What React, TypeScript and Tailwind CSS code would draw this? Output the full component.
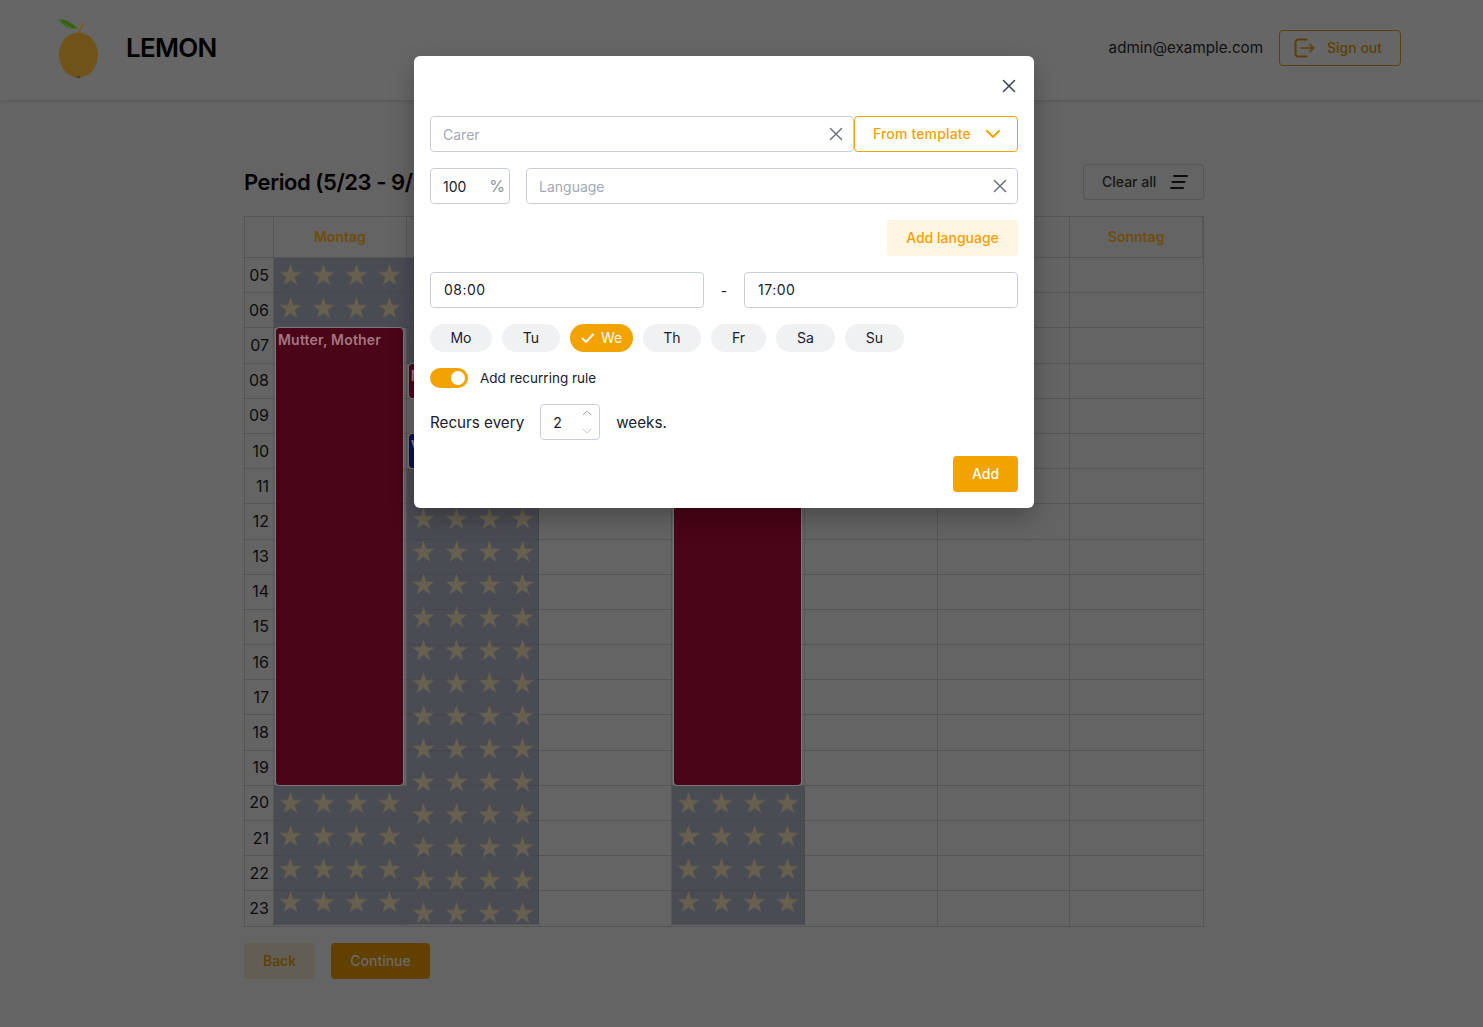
import React from "react";

const hours = ["05","06","07","08","09","10","11","12","13","14","15","16","17","18","19","20","21","22","23"];
const days = ["Montag","Dienstag","Mittwoch","Donnerstag","Freitag","Samstag","Sonntag"];

function StarBlock({ id, className, tileH = 33 }: { id: string; className: string; tileH?: number }) {
  return (
    <svg className={"w-full h-full " + className} aria-hidden="true">
      <defs>
        <pattern id={id} x="0" y="0.5" width="33" height={tileH} patternUnits="userSpaceOnUse">
          <polygon
            fill="#67604f"
            points="16.5,5.5 19.1,13.6 27.5,13.6 20.7,18.6 23.3,26.6 16.5,21.7 9.7,26.6 12.3,18.6 5.5,13.6 13.9,13.6"
          />
        </pattern>
      </defs>
      <rect width="100%" height="100%" fill="#40434c" fillOpacity="0.72" />
      <rect width="100%" height="100%" fill={`url(#${id})`} />
    </svg>
  );
}

function Ev({ className, color, text }: { className: string; color: string; text: string }) {
  return (
    <div className={`${className} ${color} z-10 ml-[2px] mr-[4px] mb-[1px] rounded-[3px] outline outline-1 outline-[#777] px-[2px] text-[14px] font-semibold tracking-[0.2px] leading-[23px] text-[#a47684]`}>
      {text}
    </div>
  );
}

function X({ size = 14, color = "#6b7280", sw = 1.5 }: { size?: number; color?: string; sw?: number }) {
  return (
    <svg width={size} height={size} viewBox="0 0 14 14" fill="none" stroke={color} strokeWidth={sw} strokeLinecap="round">
      <path d="M1.5 1.5l11 11M12.5 1.5l-11 11" />
    </svg>
  );
}

function Chip({ label, w, active }: { label: string; w: string; active?: boolean }) {
  return (
    <div className={`${w} h-7 pb-[2px] rounded-full flex items-center justify-center text-[14px] ${active ? "bg-[#f3a300] text-white" : "bg-[#f0f1f3] text-[#1a202c]"}`}>
      {active && (
        <svg width="14" height="14" viewBox="0 0 14 14" fill="none" stroke="white" strokeWidth="2" strokeLinecap="round" strokeLinejoin="round" className="mr-[6px] mt-[2px]">
          <path d="M1.5 7.5l3.5 3.5 7-7.5" />
        </svg>
      )}
      {label}
    </div>
  );
}

function Modal() {
  const field = "h-9 rounded-[4px] border border-[#c8ced9] flex items-center text-[14px]";
  return (
    <div className="absolute left-[414px] top-[56px] w-[620px] h-[452px] bg-white rounded-[6px] shadow-[0_10px_25px_rgba(0,0,0,0.25)] p-4 flex flex-col gap-4 z-20">
      <div className="h-7 flex items-center justify-end pr-[2px]">
        <X size={14} color="#374151" />
      </div>
      <div className="flex">
        <div className={`${field} w-[424px] pl-3 pr-[10px] justify-between text-[#a3a9b5]`}>
          <span>Carer</span>
          <X size={14} />
        </div>
        <div className="h-9 w-[164px] pb-[2px] rounded-[4px] border border-[#f3a300] flex items-center pl-[18px] text-[14px] font-medium tracking-[0.15px] text-[#f3a300]">
          <span>From template</span>
          <svg width="16" height="10" viewBox="0 0 16 10" fill="none" stroke="#f3a300" strokeWidth="2" className="ml-[14px] mt-[2px]" strokeLinecap="round" strokeLinejoin="round">
            <path d="M2 2l6 6 6-6" />
          </svg>
        </div>
      </div>
      <div className="flex gap-4">
        <div className={`${field} w-20 pl-3 pr-[4px] justify-between text-[#1a202c]`}>
          <span>100</span>
          <span className="text-[#8b919e] text-[16px]">%</span>
        </div>
        <div className={`${field} flex-1 pl-3 pr-[10px] justify-between text-[#a3a9b5]`}>
          <span>Language</span>
          <X size={14} />
        </div>
      </div>
      <div className="flex justify-end">
        <div className="h-9 w-[131px] pb-[2px] rounded-[4px] bg-[#fef4e2] flex items-center justify-center text-[14px] font-medium text-[#f3a300]">Add language</div>
      </div>
      <div className="flex items-center">
        <div className={`${field} w-[274px] pl-[13px] pb-[2px] tracking-[0.5px] text-[#1a202c]`}>08:00</div>
        <div className="w-10 text-center text-[14px] text-[#1a202c]">-</div>
        <div className={`${field} flex-1 pl-[13px] pb-[2px] tracking-[0.5px] text-[#1a202c]`}>17:00</div>
      </div>
      <div className="flex gap-[10px]">
        <Chip label="Mo" w="w-[62px]" />
        <Chip label="Tu" w="w-[58px]" />
        <Chip label="We" w="w-[63px]" active />
        <Chip label="Th" w="w-[58px]" />
        <Chip label="Fr" w="w-[55px]" />
        <Chip label="Sa" w="w-[59px]" />
        <Chip label="Su" w="w-[59px]" />
      </div>
      <div className="flex items-center gap-3 h-5">
        <div className="w-[38px] h-5 rounded-full bg-[#f3a300] flex items-center justify-end pr-[3px]">
          <div className="w-[14px] h-[14px] rounded-full bg-white" />
        </div>
        <span className="text-[13.5px] text-[#1a202c]">Add recurring rule</span>
      </div>
      <div className="flex items-center text-[15.2px] text-[#1a202c]">
        <span className="pt-[2px]">Recurs every</span>
        <div className={`${field} w-[60px] ml-4 mr-4 pl-[12px] pr-[7px] justify-between`}>
          <span>2</span>
          <div className="flex flex-col gap-[12px]">
            <svg width="10" height="6" viewBox="0 0 10 6" fill="none" stroke="#a8aeb9" strokeWidth="1" strokeLinecap="round"><path d="M1 5l4-4 4 4" /></svg>
            <svg width="10" height="6" viewBox="0 0 10 6" fill="none" stroke="#c4c9d2" strokeWidth="1" strokeLinecap="round"><path d="M1 1l4 4 4-4" /></svg>
          </div>
        </div>
        <span className="pt-[2px]">weeks.</span>
      </div>
      <div className="flex justify-end">
        <div className="h-9 w-[65px] pb-[2px] rounded-[4px] bg-[#f3a300] flex items-center justify-center text-[14px] font-medium text-white">Add</div>
      </div>
    </div>
  );
}

export default function App() {
  return (
    <div className="relative h-[1027px] w-full overflow-hidden bg-[#646464] text-[#0c0c0c]" style={{ fontFamily: "Inter, 'Liberation Sans', sans-serif" }}>
      <header className="h-[100px] pb-1 bg-[#666666] shadow-[0_1px_3px_rgba(0,0,0,0.15)] flex items-center pl-[57px] pr-[82px]">
        <svg width="44" height="62" viewBox="0 0 44 62" className="mt-[-1px]">
          <path d="M22 17 Q23 11 26.5 6" stroke="#7a5a1a" strokeWidth="1.6" fill="none" />
          <ellipse cx="21.5" cy="38" rx="19.5" ry="22.5" fill="#6f5318" />
          <path d="M19 60 Q21.5 61.5 24 60 Q21.5 59 19 60Z" fill="#2e2408" />
          <path d="M1 2 Q13 1 21 12 Q8 13 1 2Z" fill="#3f6a1c" />
          <path d="M6 4 L17 10" stroke="#1d2f0d" strokeWidth="0.8" strokeDasharray="2 1" />
        </svg>
        <div className="ml-[25px] pb-[2px] text-[26px] font-semibold tracking-[-0.7px] text-black">LEMON</div>
        <div className="ml-auto text-[15.2px] text-[#111]">admin@example.com</div>
        <div className="ml-4 w-[122px] h-9 rounded-[4px] border border-[#5e3f02] flex items-center pl-[14px] text-[14px] font-medium text-[#5e3f02]">
          <svg width="21" height="20" viewBox="0 0 21 20" fill="none" stroke="#5e3f02" strokeWidth="2" strokeLinecap="round" strokeLinejoin="round">
            <path d="M12.5 1.5H4.5a3 3 0 0 0-3 3v11a3 3 0 0 0 3 3h8" />
            <path d="M7.5 10h12M16 6.5l3.5 3.5-3.5 3.5" strokeWidth="1.6" />
          </svg>
          <span className="ml-3 pb-[1px]">Sign out</span>
        </div>
      </header>

      <main className="ml-[244px] w-[960px] pt-16">
        <div className="flex items-center justify-between h-9">
          <h1 className="text-[22px] font-semibold tracking-[-0.45px] text-black">Period (5/23 - 9/23)</h1>
          <div className="w-[121px] h-9 pb-[2px] rounded-[4px] border border-[#555] flex items-center pl-[18px] text-[14px] font-medium text-[#171717]">
            <span>Clear all</span>
            <svg width="18" height="16" viewBox="0 0 18 16" fill="none" stroke="#0d0d0d" strokeWidth="2" className="ml-[14px] mt-[2px]" strokeLinecap="round">
              <path d="M4 2h13M2.5 8h12M1 14h12" />
            </svg>
          </div>
        </div>

        <div className="mt-4 border border-[#555] grid grid-cols-[29px_repeat(7,minmax(0,1fr))] grid-rows-[41px_repeat(18,35.2px)_34.2px]">
          <div className="row-start-1 col-start-1 border-r border-b border-[#555]" />
          {days.map((d) => (
            <div key={d} className="row-start-1 pb-[2px] border-r last:border-r-0 border-b border-[#555] flex items-center justify-center text-[14px] font-semibold text-[#704d0a]">
              {d}
            </div>
          ))}
          {hours.map((h, i) => (
            <React.Fragment key={h}>
              <div className={`col-start-1 border-r border-[#555] flex items-center justify-end pr-[4px] pb-[1px] text-[16px] text-[#0c0c0c] ${i < 18 ? "border-b" : ""}`} style={{ gridRowStart: i + 2 }}>
                {h}
              </div>
              {days.map((d, j) => (
                <div
                  key={d}
                  className={`border-[#555] ${j < 6 ? "border-r" : ""} ${i < 18 ? "border-b" : ""}`}
                  style={{ gridRowStart: i + 2, gridColumnStart: j + 2 }}
                />
              ))}
            </React.Fragment>
          ))}

          <StarBlock id="mon-a" className="col-start-2 row-start-2 row-span-2 z-[5]" />
          <Ev className="col-start-2 row-start-4 row-span-13" color="bg-[#4a0518]" text="Mutter, Mother" />
          <StarBlock id="mon-b" className="col-start-2 row-start-17 row-span-4 z-[5] pb-[1px]" />

          <StarBlock id="tue-a" className="col-start-3 row-start-2 row-span-3 z-[5]" />
          <Ev className="col-start-3 row-start-5" color="bg-[#4a0518]" text="Mutter" />
          <Ev className="col-start-3 row-start-7" color="bg-[#0a1150]" text="Vater" />
          <StarBlock id="tue-b" tileH={32.83} className="col-start-3 row-start-8 row-span-13 z-[5] pb-[1px]" />

          <StarBlock id="thu-a" className="col-start-5 row-start-2 row-span-2 z-[5]" />
          <Ev className="col-start-5 row-start-4 row-span-13" color="bg-[#4a0518]" text="Mutter, Mother" />
          <StarBlock id="thu-b" className="col-start-5 row-start-17 row-span-4 z-[5] pb-[1px]" />
        </div>

        <div className="mt-4 flex gap-4">
          <div className="h-9 w-[71px] pb-[1px] rounded-[4px] bg-[#625e56] flex items-center justify-center text-[14px] font-medium text-[#5e3f02]">Back</div>
          <div className="h-9 w-[99px] pb-[1px] rounded-[4px] bg-[#614000] flex items-center justify-center text-[14px] font-medium text-[#6b6b6b]">Continue</div>
        </div>
      </main>

      <Modal />
    </div>
  );
}
